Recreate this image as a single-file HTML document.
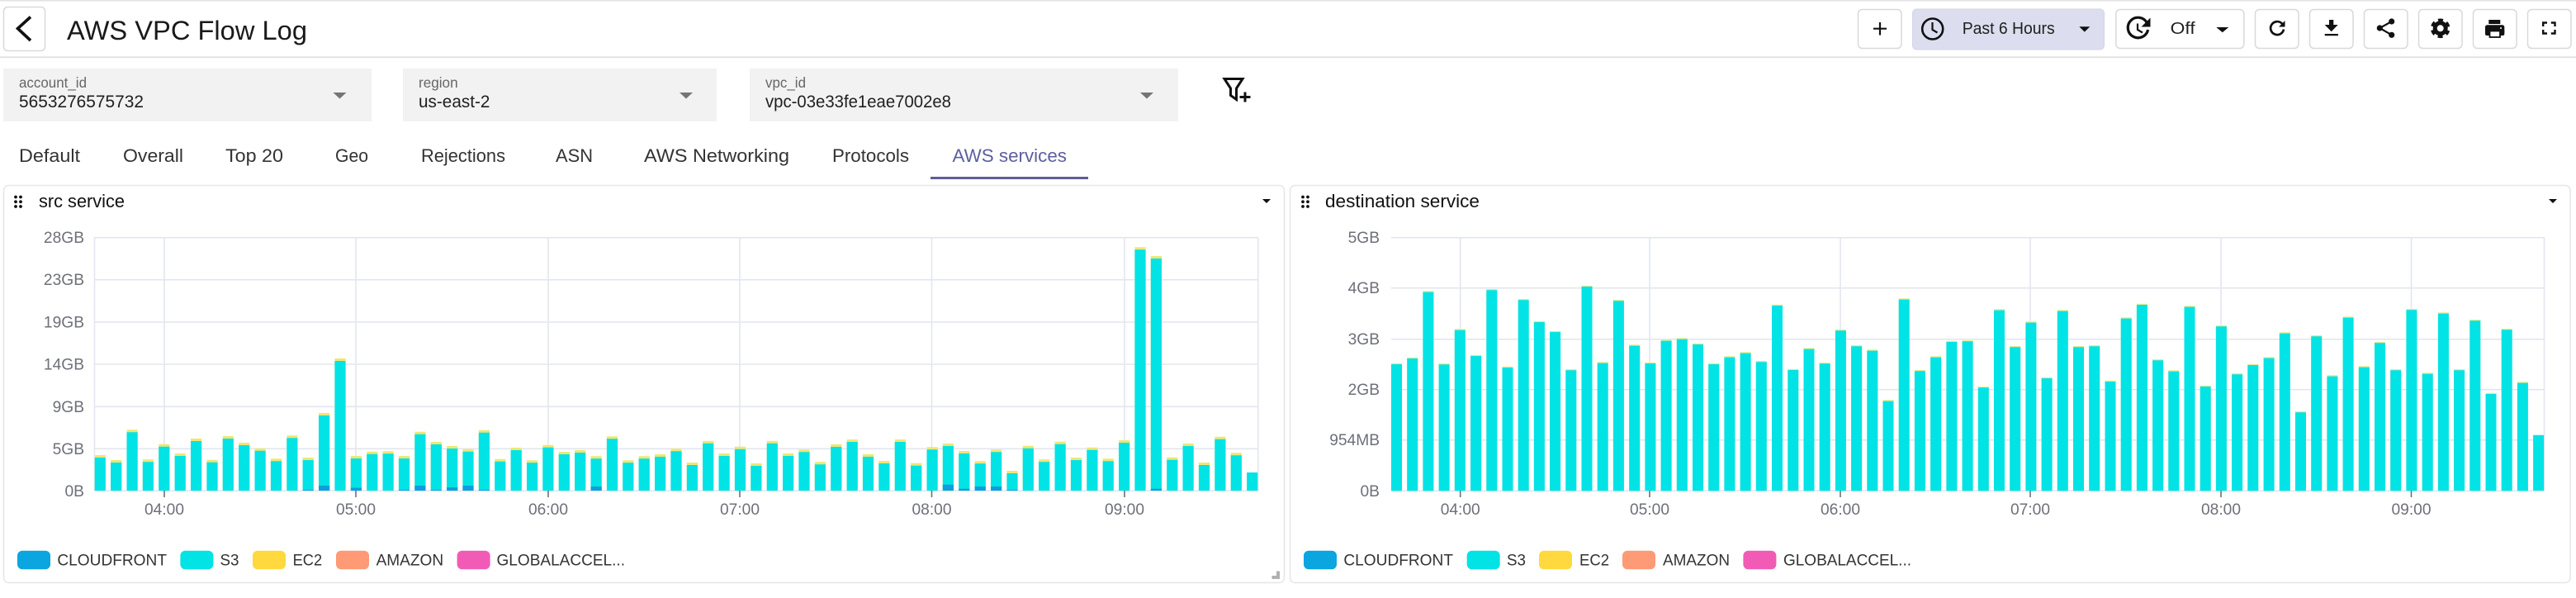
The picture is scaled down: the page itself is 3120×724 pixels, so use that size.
<!DOCTYPE html>
<html><head><meta charset="utf-8"><title>AWS VPC Flow Log</title>
<style>
html,body{margin:0;padding:0;background:#fff;width:3120px;height:724px;overflow:hidden}
svg{display:block}
text{font-family:"Liberation Sans",sans-serif}
.tab{font-size:22.4px;fill:#333}
.lb{font-size:17.6px;fill:#666}
.val{font-size:20.8px;fill:#1f1f1f}
.ax{font-size:19.2px;fill:#6e7079}
.lg{font-size:19.2px;fill:#333}
.pt{font-size:22px;fill:#111}
.btn{fill:#fff;stroke:#d9d9d9;stroke-width:1.5}
.g{stroke:#e3e6ef;stroke-width:1.6;fill:none}
.t{stroke:#6e7079;stroke-width:1.6;fill:none}
</style></head><body>
<svg width="3120" height="724" viewBox="0 0 3120 724" xmlns="http://www.w3.org/2000/svg">
<defs>
<path id="lb" d="M121.300 591V551M140.700 591V557M160.100 591V520.300M179.400 591V556.300M198.800 591V537.700M218.200 591V549M237.600 591V531M257 591V556.700M276.300 591V528M295.700 591V536M315.100 591V542.700M334.500 591V555.300M353.900 591V527.300M373.200 591V554M392.600 591V500M412 591V434M431.400 591V552M450.800 591V546.700M470.100 591V546.300M489.500 591V552M508.900 591V522.700M528.300 591V535M547.700 591V540M567 591V543.700M586.400 591V520.700M605.800 591V555.700M625.200 591V542M644.600 591V557.300M663.900 591V538.700M683.300 591V547M702.700 591V545M722.100 591V552.300M741.500 591V528.300M760.800 591V557.300M780.200 591V552.300M799.600 591V550M819 591V543.300M838.400 591V560M857.700 591V533.700M877.100 591V549M896.500 591V540.700M915.900 591V561M935.300 591V533.700M954.600 591V549M974 591V544.300M993.400 591V559.300M1012.800 591V538M1032.200 591V532M1051.500 591V550M1070.900 591V558M1090.300 591V532M1109.700 591V560.700M1129.100 591V541.300M1148.400 591V537M1167.800 591V546M1187.200 591V558.300M1206.600 591V544.300M1226 591V570M1245.300 591V539.700M1264.700 591V556.300M1284.100 591V534.700M1303.500 591V554M1322.900 591V541.700M1342.200 591V555.300M1361.600 591V533M1381 591V299.300M1400.400 591V310M1419.800 591V553.700M1439.100 591V537M1458.500 591V560M1477.900 591V528.700M1497.300 591V548.300"/>
<path id="rb" d="M1691.500 593V439.700M1710.700 593V432.700M1729.900 593V352.300M1749.100 593V440M1768.300 593V398.300M1787.600 593V429.700M1806.800 593V350M1826 593V443.700M1845.200 593V362M1864.400 593V388.700M1883.600 593V400.700M1902.800 593V447M1922 593V345.700M1941.200 593V438.300M1960.400 593V363M1979.700 593V417.300M1998.900 593V438.700M2018.100 593V411.300M2037.300 593V409.300M2056.500 593V415.700M2075.700 593V439.700M2094.900 593V431.300M2114.100 593V426.300M2133.300 593V437M2152.500 593V368.700M2171.800 593V446.700M2191 593V421.300M2210.200 593V439M2229.400 593V399M2248.600 593V418M2267.800 593V423.300M2287 593V484.300M2306.200 593V361.300M2325.400 593V448M2344.600 593V431.300M2363.900 593V412.700M2383.100 593V412M2402.300 593V468M2421.500 593V374.300M2440.700 593V419M2459.900 593V389.300M2479.100 593V456.700M2498.300 593V375.300M2517.500 593V419M2536.700 593V418M2556 593V460.700M2575.200 593V384.300M2594.400 593V367.700M2613.600 593V435M2632.800 593V448.300M2652 593V370.300M2671.200 593V466.700M2690.400 593V394M2709.600 593V452M2728.800 593V440.700M2748.100 593V432.300M2767.300 593V402.300M2786.500 593V498M2805.700 593V406M2824.900 593V454.300M2844.100 593V383.300M2863.300 593V443.300M2882.500 593V414M2901.700 593V447M2920.900 593V374M2940.200 593V451.300M2959.400 593V378.300M2978.600 593V447M2997.800 593V387M3017 593V475.700M3036.200 593V398M3055.400 593V462.300"/>
</defs>
<rect width="3120" height="724" fill="#fff"/>
<rect x="0" y="0" width="3120" height="1.5" fill="#e2e2e2"/>
<rect x="0" y="68.3" width="3120" height="1.9" fill="#e2e2e2"/>

<!-- header -->
<rect class="btn" x="4.5" y="8.5" width="50" height="53" rx="5"/>
<path d="M37 20.5L21.5 34.5L37 49" fill="none" stroke="#111" stroke-width="3.6"/>
<text x="81" y="48" font-size="32" fill="#1a1a1a" textLength="291" lengthAdjust="spacingAndGlyphs">AWS VPC Flow Log</text>

<!-- toolbar -->
<rect class="btn" x="2250.5" y="11.5" width="52.5" height="47" rx="5"/>
<path d="M2277 27V42.500M2269 34.700H2285" stroke="#111" stroke-width="2.2" fill="none"/>
<rect x="2316.500" y="11" width="232" height="49" rx="5" fill="#dcdeef" stroke="#d3d5e6"/>
<circle cx="2340.700" cy="35" r="12.500" fill="none" stroke="#111" stroke-width="2.600"/>
<path d="M2340.500 27V36L2346.500 39.500" fill="none" stroke="#111" stroke-width="2.200"/>
<text x="2376.700" y="41" font-size="20" fill="#1f1f1f" textLength="112" lengthAdjust="spacingAndGlyphs">Past 6 Hours</text>
<path d="M2518.300 32.300H2531.300L2524.800 38.600Z" fill="#111"/>
<rect class="btn" x="2562.800" y="11.500" width="155" height="47" rx="5"/>
<path d="M2600.300 27.500A12.300 12.300 0 1 0 2601.600 36" fill="none" stroke="#111" stroke-width="3.200"/>
<path d="M2604.500 21.500V32.500H2593.500Z" fill="#111"/>
<path d="M2589 28.500V36L2595 39.500" fill="none" stroke="#111" stroke-width="2.200"/>
<text x="2628.700" y="41" font-size="20" fill="#1f1f1f" textLength="30" lengthAdjust="spacingAndGlyphs">Off</text>
<path d="M2684.300 33H2699.300L2691.800 39.300Z" fill="#111"/>

<rect class="btn" x="2731.500" y="11.500" width="52.500" height="47" rx="5"/>
<path d="M2764.300 29A8 8 0 1 0 2766 35.500" fill="none" stroke="#111" stroke-width="2.700"/>
<path d="M2767.500 25V32.500H2760Z" fill="#111"/>

<rect class="btn" x="2797.500" y="11.500" width="52.500" height="47" rx="5"/>
<path d="M2821 24H2826.300V30H2831.700L2823.700 38.300L2815.700 30H2821ZM2815.700 41H2831.900V43.200H2815.700Z" fill="#111"/>

<rect class="btn" x="2863.500" y="11.500" width="52.500" height="47" rx="5"/>
<path d="M2896.700 26L2882.300 34L2896.700 42.300" fill="none" stroke="#111" stroke-width="2.200"/>
<circle cx="2896.700" cy="26" r="3.600" fill="#111"/><circle cx="2882.300" cy="34" r="3.600" fill="#111"/><circle cx="2896.700" cy="42.300" r="3.600" fill="#111"/>

<rect class="btn" x="2929.500" y="11.500" width="52.500" height="47" rx="5"/>
<circle cx="2955.700" cy="34.300" r="6.500" fill="none" stroke="#111" stroke-width="5"/>
<circle cx="2955.700" cy="34.300" r="10" fill="none" stroke="#111" stroke-width="3.600" stroke-dasharray="5.800 4.670" stroke-dashoffset="2.900" transform="rotate(30 2955.700 34.300)"/>

<rect class="btn" x="2995.500" y="11.500" width="52.500" height="47" rx="5"/>
<path d="M3014.300 24H3028.300V29H3014.300Z" fill="#111"/>
<rect x="3010" y="30.300" width="23.300" height="11" rx="2.500" fill="#111"/>
<rect x="3010" y="36" width="23.300" height="7" rx="2" fill="#111"/>
<rect x="3015.500" y="37.500" width="12.500" height="7.500" fill="#fff" stroke="#111" stroke-width="1.800"/>
<circle cx="3029" cy="34" r="1" fill="#fff"/>

<rect class="btn" x="3061.500" y="11.500" width="52.500" height="47" rx="5"/>
<path d="M3080.200 32V27.500H3085M3089.800 27.500H3094.500V32M3094.500 36V40.500H3089.800M3085 40.500H3080.200V36" fill="none" stroke="#111" stroke-width="2.400"/>

<!-- filters -->
<rect x="4" y="83" width="446" height="64" fill="#f2f2f2"/>
<rect x="488" y="83" width="380" height="64" fill="#f2f2f2"/>
<rect x="908" y="83" width="519" height="64" fill="#f2f2f2"/>
<text class="lb" x="23" y="106" textLength="82" lengthAdjust="spacingAndGlyphs">account_id</text>
<text class="val" x="23" y="130" textLength="151" lengthAdjust="spacingAndGlyphs">5653276575732</text>
<text class="lb" x="507" y="106" textLength="47.600" lengthAdjust="spacingAndGlyphs">region</text>
<text class="val" x="507" y="130" textLength="86.400" lengthAdjust="spacingAndGlyphs">us-east-2</text>
<text class="lb" x="927" y="106" textLength="49" lengthAdjust="spacingAndGlyphs">vpc_id</text>
<text class="val" x="927" y="130" textLength="225" lengthAdjust="spacingAndGlyphs">vpc-03e33fe1eae7002e8</text>
<path d="M403.500 112H419.500L411.500 119.500Z M823 112H839L831 119.500Z M1381 112H1397L1389 119.500Z" fill="#757575"/>
<path d="M1483 95.500H1505L1497.500 107V120.500L1490.500 115.500V107Z" fill="none" stroke="#111" stroke-width="3"/>
<path d="M1501.500 117.500H1514.500M1508 111.500V123.500" fill="none" stroke="#111" stroke-width="3"/>

<!-- tabs -->
<text class="tab" x="23" y="196" textLength="74" lengthAdjust="spacingAndGlyphs">Default</text>
<text class="tab" x="149" y="196" textLength="73" lengthAdjust="spacingAndGlyphs">Overall</text>
<text class="tab" x="273" y="196" textLength="70" lengthAdjust="spacingAndGlyphs">Top 20</text>
<text class="tab" x="406" y="196" textLength="40" lengthAdjust="spacingAndGlyphs">Geo</text>
<text class="tab" x="510" y="196" textLength="102" lengthAdjust="spacingAndGlyphs">Rejections</text>
<text class="tab" x="673" y="196" textLength="45" lengthAdjust="spacingAndGlyphs">ASN</text>
<text class="tab" x="780" y="196" textLength="176" lengthAdjust="spacingAndGlyphs">AWS Networking</text>
<text class="tab" x="1008" y="196" textLength="93" lengthAdjust="spacingAndGlyphs">Protocols</text>
<text class="tab" x="1153.500" y="196" textLength="138.500" lengthAdjust="spacingAndGlyphs" style="fill:#5c5f9e">AWS services</text>
<rect x="1127" y="214" width="191" height="3" fill="#5b5f97"/>

<!-- panels -->
<rect x="4.500" y="224.500" width="1551" height="481" rx="6" fill="#fff" stroke="#e6e6e6" stroke-width="1.500"/>
<rect x="1562.500" y="224.500" width="1550.500" height="481" rx="6" fill="#fff" stroke="#e6e6e6" stroke-width="1.500"/>
<g fill="#111">
<circle cx="19" cy="238.500" r="1.900"/><circle cx="25" cy="238.500" r="1.900"/><circle cx="19" cy="244.300" r="1.900"/><circle cx="25" cy="244.300" r="1.900"/><circle cx="19" cy="250" r="1.900"/><circle cx="25" cy="250" r="1.900"/>
<circle cx="1578" cy="238.500" r="1.900"/><circle cx="1584" cy="238.500" r="1.900"/><circle cx="1578" cy="244.300" r="1.900"/><circle cx="1584" cy="244.300" r="1.900"/><circle cx="1578" cy="250" r="1.900"/><circle cx="1584" cy="250" r="1.900"/>
<path d="M1529 241H1539L1534 246Z M3087 241H3097L3092 246Z"/>
</g>
<text class="pt" x="47" y="251" textLength="104" lengthAdjust="spacingAndGlyphs">src service</text>
<text class="pt" x="1605" y="251" textLength="187" lengthAdjust="spacingAndGlyphs">destination service</text>
<path d="M1546 697V691.500H1550V701H1540.500V697Z" fill="#b0b0b0"/>

<!-- left chart -->
<path class="g" d="M114 287.700H1524M114 338.700H1524M114 390H1524M114 441H1524M114 492.300H1524M114 543.300H1524M114 594.300H1524M114.500 287.700V594M1523.800 287.700V594M199 287.700V594M431 287.700V594M664 287.700V594M896 287.700V594M1128.500 287.700V594M1362 287.700V594"/>
<path class="t" d="M199 594V602M431 594V602M664 594V602M896 594V602M1128.500 594V602M1362 594V602"/>
<g text-anchor="end" class="ax">
<text class="ax" x="102" y="294.200">28GB</text><text class="ax" x="102" y="345.200">23GB</text><text class="ax" x="102" y="396.500">19GB</text><text class="ax" x="102" y="447.500">14GB</text><text class="ax" x="102" y="498.800">9GB</text><text class="ax" x="102" y="549.800">5GB</text><text class="ax" x="102" y="600.800">0B</text>
</g>
<g text-anchor="middle">
<text class="ax" x="199" y="623">04:00</text><text class="ax" x="431" y="623">05:00</text><text class="ax" x="664" y="623">06:00</text><text class="ax" x="896" y="623">07:00</text><text class="ax" x="1128.500" y="623">08:00</text><text class="ax" x="1362" y="623">09:00</text>
</g>
<g fill="none" stroke-width="13.200">
<use href="#lb" stroke="#f0e672"/>
<use href="#lb" transform="translate(0,3)" stroke="#02e3e6"/>
<path stroke="#02e3e6" d="M1516.700 594V572"/>
<path stroke="#0b9fdd" d="M373.200 594V593M392.600 594V588M431.400 594V590.500M489.500 594V593M508.900 594V588M528.300 594V593M547.700 594V590M567 594V588M586.400 594V593M722.100 594V589M1148.400 594V586.700M1167.800 594V591.700M1187.200 594V589M1206.600 594V589M1226 594V593M1400.400 594V591.700"/>
</g>
<g>
<rect x="21" y="666.800" width="40" height="22.400" rx="6" fill="#0ba5e0"/><text class="lg" x="69.400" y="684.700" textLength="132.600" lengthAdjust="spacingAndGlyphs">CLOUDFRONT</text>
<rect x="218.400" y="666.800" width="40" height="22.400" rx="6" fill="#02e3e6"/><text class="lg" x="266.500" y="684.700" textLength="23" lengthAdjust="spacingAndGlyphs">S3</text>
<rect x="306" y="666.800" width="40" height="22.400" rx="6" fill="#ffd93d"/><text class="lg" x="354.600" y="684.700" textLength="35.500" lengthAdjust="spacingAndGlyphs">EC2</text>
<rect x="407" y="666.800" width="40" height="22.400" rx="6" fill="#ff9a76"/><text class="lg" x="455.600" y="684.700" textLength="81.500" lengthAdjust="spacingAndGlyphs">AMAZON</text>
<rect x="553.600" y="666.800" width="40" height="22.400" rx="6" fill="#f15bb5"/><text class="lg" x="601.500" y="684.700" textLength="155.500" lengthAdjust="spacingAndGlyphs">GLOBALACCEL...</text>
</g>

<!-- right chart -->
<path class="g" d="M1685 287.700H3082M1685 348.700H3082M1685 410.700H3082M1685 471.700H3082M1685 532.700H3082M1685 594.300H3082M3081.500 287.700V594M1768.700 287.700V594M1998 287.700V594M2229 287.700V594M2459 287.700V594M2690 287.700V594M2920.500 287.700V594"/>
<path class="t" d="M1768.700 594V602M1998 594V602M2229 594V602M2459 594V602M2690 594V602M2920.500 594V602"/>
<g text-anchor="end">
<text class="ax" x="1671" y="294.200">5GB</text><text class="ax" x="1671" y="355.200">4GB</text><text class="ax" x="1671" y="417.200">3GB</text><text class="ax" x="1671" y="478.200">2GB</text><text class="ax" x="1671" y="539.200">954MB</text><text class="ax" x="1671" y="600.800">0B</text>
</g>
<g text-anchor="middle">
<text class="ax" x="1768.700" y="623">04:00</text><text class="ax" x="1998" y="623">05:00</text><text class="ax" x="2229" y="623">06:00</text><text class="ax" x="2459" y="623">07:00</text><text class="ax" x="2690" y="623">08:00</text><text class="ax" x="2920.500" y="623">09:00</text>
</g>
<g fill="none" stroke-width="13">
<use href="#rb" stroke="#e2ec8c"/>
<use href="#rb" transform="translate(0,1.300)" stroke="#02e3e6"/>
<path stroke="#02e3e6" d="M3074.600 594V526.700"/>
</g>
<g>
<rect x="1579" y="666.800" width="40" height="22.400" rx="6" fill="#0ba5e0"/><text class="lg" x="1627.400" y="684.700" textLength="132.600" lengthAdjust="spacingAndGlyphs">CLOUDFRONT</text>
<rect x="1776.700" y="666.800" width="40" height="22.400" rx="6" fill="#02e3e6"/><text class="lg" x="1825" y="684.700" textLength="23" lengthAdjust="spacingAndGlyphs">S3</text>
<rect x="1864" y="666.800" width="40" height="22.400" rx="6" fill="#ffd93d"/><text class="lg" x="1913" y="684.700" textLength="36" lengthAdjust="spacingAndGlyphs">EC2</text>
<rect x="1965" y="666.800" width="40" height="22.400" rx="6" fill="#ff9a76"/><text class="lg" x="2014" y="684.700" textLength="81" lengthAdjust="spacingAndGlyphs">AMAZON</text>
<rect x="2111.400" y="666.800" width="40" height="22.400" rx="6" fill="#f15bb5"/><text class="lg" x="2160" y="684.700" textLength="155" lengthAdjust="spacingAndGlyphs">GLOBALACCEL...</text>
</g>
</svg>
</body></html>
